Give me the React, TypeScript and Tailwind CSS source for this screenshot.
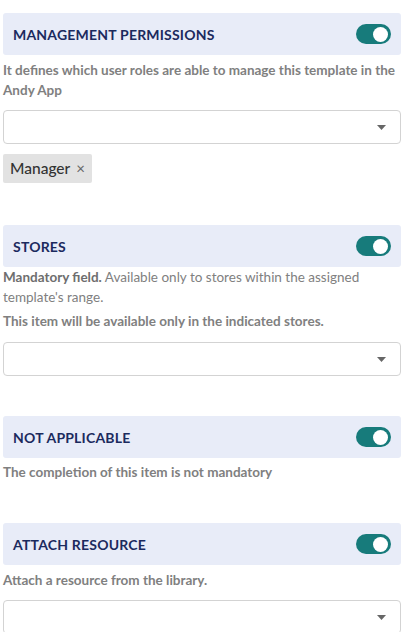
import React from 'react';

const Toggle = () => (
  <div className="w-[35px] h-[20px] rounded-full bg-[#177b7b] flex items-center justify-end px-[3px]">
    <div className="w-[15px] h-[15px] rounded-full bg-white"></div>
  </div>
);

const Header = ({ title }: { title: string }) => (
  <div className="h-[42px] rounded-[3px] bg-[#e8ecf8] flex items-center justify-between pl-[10px] pr-[10px]">
    <span className="text-[14px] font-bold tracking-[0.2px] text-[#1b2a5e]">{title}</span>
    <Toggle />
  </div>
);

const Select = () => (
  <div className="h-[34px] rounded-[4px] border border-[#d3d3d3] bg-white flex items-center justify-end pr-[14px]">
    <svg width="9" height="5" viewBox="0 0 9 5">
      <path d="M0 0h9L4.5 5z" fill="#666" />
    </svg>
  </div>
);

export default function App() {
  return (
    <div className="bg-white w-[406px] h-[632px] overflow-hidden pl-[3px] pr-[5px] pt-[13px] font-['Lato',sans-serif]">
      {/* management permissions */}
      <Header title="MANAGEMENT PERMISSIONS" />
      <p className="mt-[5px] text-[13.5px] leading-[20px] font-bold text-[#808080]">
        It defines which user roles are able to manage this template in the Andy App
      </p>
      <div className="mt-[10px]">
        <Select />
      </div>
      <div className="mt-[10px] inline-flex items-center gap-[6px] h-[29px] px-[7px] rounded-[2px] bg-[#e2e2e2]">
        <span className="text-[15.5px] text-[#333] font-medium">Manager</span>
        <span className="text-[15px] leading-none text-[#666]">×</span>
      </div>

      {/* stores */}
      <div className="mt-[42px]">
        <Header title="STORES" />
      </div>
      <p className="text-[13.5px] leading-[20px] text-[#808080]">
        <span className="font-bold text-[#6e6e6e]">Mandatory field.</span> Available only to stores within the assigned template's range.
      </p>
      <p className="mt-[4px] text-[13.5px] leading-[20px] font-bold text-[#808080]">
        This item will be available only in the indicated stores.
      </p>
      <div className="mt-[11px]">
        <Select />
      </div>

      {/* not applicable */}
      <div className="mt-[40px]">
        <Header title="NOT APPLICABLE" />
      </div>
      <p className="mt-[4px] text-[13.5px] leading-[20px] font-bold text-[#808080]">
        The completion of this item is not mandatory
      </p>

      {/* attach resource */}
      <div className="mt-[41px]">
        <Header title="ATTACH RESOURCE" />
      </div>
      <p className="mt-[5px] text-[13.5px] leading-[20px] font-bold text-[#808080]">
        Attach a resource from the library.
      </p>
      <div className="mt-[10px]">
        <Select />
      </div>
    </div>
  );
}
